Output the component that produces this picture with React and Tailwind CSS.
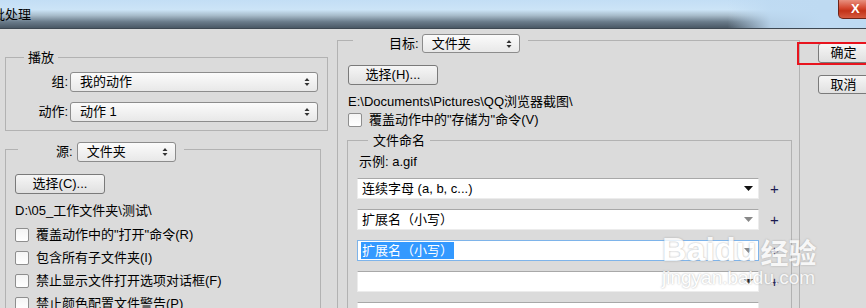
import React from "react";

const UpDown = () => (
<svg width="6" height="10" viewBox="0 0 6 10">
<path d="M3 1 L5.5 4 H0.5 Z M3 9 L5.5 6 H0.5 Z" fill="#333"/>
</svg>
)

const Select = ({className,children}) => (
<div className={`flex items-center justify-between pl-[9px] pr-[7px] border border-[#8c8c8c] rounded-[3px] bg-[linear-gradient(#fbfbfb,#e8e8e8)] ${className}`}>
<span>{children}</span>
<UpDown/>
</div>
)

const Button = ({className,children}) => (
<div className={`flex items-center justify-center border border-[#7a7a7a] rounded-[3px] bg-[linear-gradient(#f6f6f6,#e0e0e0)] ${className}`}>
{children}
</div>
)

const Check = ({children}) => (
<div className="flex items-center h-[23px] gap-[7px] shrink-0">
<div className="w-[14px] h-[14px] border border-[#8e8e8e] rounded-[2px] bg-[linear-gradient(#f4f4f4,#ffffff)]"></div>
<span>{children}</span>
</div>
)

const NameRow = ({children,selected,dark}) => (
<div className="flex items-center shrink-0">
<div className={`flex items-center justify-between w-[402px] h-[21px] bg-white border ${selected?"border-[#7eb4ea]":"border-[#ececec] border-t-[#a8a8a8]"} pl-[3px] pr-[5px]`}>
<span className={selected?"bg-[#3399ff] text-white px-[1px] leading-[17px]":"px-[1px]"}>{children}</span>
<svg width="9" height="5" viewBox="0 0 9 5"><path d="M0 0 H9 L4.5 5 Z" fill={dark?"#111":"#888"}/></svg>
</div>
<span className="ml-[11px] text-[15px] leading-none text-[#1a1a50]">+</span>
</div>
)

export default function App(){
return(
<div className="relative w-[866px] h-[308px] overflow-hidden bg-[#dbdbdb] flex flex-col text-[13px] leading-[16px] text-black font-['Liberation_Sans','Noto_Sans_CJK_SC',sans-serif]">

{/* TITLE BAR */}
<div className="flex shrink-0 h-[29px] border-b border-[#3e4852] bg-[linear-gradient(to_right,rgba(190,218,242,0)_0%,rgba(190,218,242,0)_84%,rgba(190,218,242,0.9)_89%,rgba(190,218,242,1)_95%),linear-gradient(to_bottom,#c3def5_0%,#cce4f7_35%,#a8bccb_55%,#6a7b8a_78%,#4a5865_100%)]">
<span className="ml-[-8px] mt-[6px] text-[13px] leading-[16px] font-['Noto_Sans_CJK_SC',sans-serif]">批处理</span>
<div className="flex-1"></div>
<div className="w-[43px] h-[19px] mr-[-15px] rounded-bl-[5px] border border-t-0 border-[#6d2418] bg-[linear-gradient(#e8907f,#d4472f_45%,#c23218_60%,#d45a40)] flex items-center pl-[12px] text-white font-bold text-[13px]">X</div>
</div>

<div className="flex flex-1 min-h-0">

{/* LEFT */}
<div className="w-[332px] shrink-0 pl-[5px] pt-[28px] flex flex-col">

<div className="relative shrink-0 w-[323px] h-[74px] border border-[#b2b2b2] pt-[14px] flex flex-col gap-[10px]">
<span className="absolute left-[18px] top-[-9px] bg-[#dbdbdb] px-[4px] font-['Noto_Sans_CJK_SC',sans-serif]">播放</span>
<div className="flex items-center">
<span className="w-[62px] text-right">组:</span>
<Select className="ml-[2px] w-[248px] h-[20px]">我的动作</Select>
</div>
<div className="flex items-center">
<span className="w-[62px] text-right">动作:</span>
<Select className="ml-[2px] w-[248px] h-[20px]">动作 1</Select>
</div>
</div>

<div className="relative w-[316px] flex-1 mt-[18px] border border-b-0 border-[#b2b2b2] pt-[24px] pl-[9px] flex flex-col">
<div className="absolute left-[12px] top-[-8px] bg-[#dbdbdb] pl-[38px] pr-[8px] flex items-center gap-[4px]">
<span>源:</span>
<Select className="w-[99px] h-[20px]">文件夹</Select>
</div>
<Button className="w-[90px] h-[20px] shrink-0">选择(C)...</Button>
<div className="mt-[9px] shrink-0">D:\05_工作文件夹\测试\</div>
<div className="mt-[4px] flex flex-col">
<Check>覆盖动作中的"打开"命令(R)</Check>
<Check>包含所有子文件夹(I)</Check>
<Check>禁止显示文件打开选项对话框(F)</Check>
<Check>禁止颜色配置文件警告(P)</Check>
</div>
</div>

</div>

{/* MIDDLE */}
<div className="w-[468px] shrink-0 pl-[5px] pt-[11px] flex flex-col">
<div className="relative flex-1 border border-b-0 border-[#b2b2b2] pt-[24px] pl-[10px] flex flex-col">
<div className="absolute left-[15px] top-[-7px] bg-[#dbdbdb] pl-[36px] pr-[8px] flex items-center gap-[3px]">
<span>目标:</span>
<Select className="w-[98px] h-[19px]">文件夹</Select>
</div>
<Button className="w-[90px] h-[20px] shrink-0">选择(H)...</Button>
<div className="mt-[9px] shrink-0">E:\Documents\Pictures\QQ浏览器截图\</div>
<div className="mt-[-2px] shrink-0">
<Check>覆盖动作中的"存储为"命令(V)</Check>
</div>

<div className="relative ml-[-1px] mt-[9px] w-[445px] flex-1 border border-b-0 border-[#b2b2b2] pt-[13px] pl-[9px] flex flex-col">
<span className="absolute left-[20px] top-[-9px] bg-[#dbdbdb] px-[5px] font-['Noto_Sans_CJK_SC',sans-serif]">文件命名</span>
<div className="ml-[2px] shrink-0">示例: a.gif</div>
<div className="mt-[8px] flex flex-col gap-[10px]">
<NameRow dark>连续字母 (a, b, c...)</NameRow>
<NameRow>扩展名（小写）</NameRow>
<NameRow selected>扩展名（小写）</NameRow>
<NameRow dark>{""}</NameRow>
<NameRow>{""}</NameRow>
</div>
</div>
</div>
</div>

{/* RIGHT */}
<div className="flex-1 min-w-0 pl-[18px] pt-[14px] flex flex-col gap-[12px]">
<Button className="w-[75px] h-[20px] shrink-0 pr-[24px]">确定</Button>
<Button className="w-[75px] h-[19px] shrink-0 pr-[24px]">取消</Button>
</div>

</div>

{/* HIGHLIGHT BOX */}
<div className="absolute left-[797px] top-[42px] w-[72px] h-[23px] border-2 border-[#e8141e]"></div>

{/* WATERMARK */}
<div className="absolute left-[662px] top-[232px] flex flex-col items-start text-white opacity-80 [text-shadow:0_0_2px_#9a9a9a] pointer-events-none">
<div className="flex items-end leading-none">
<span className="text-[34px] font-bold font-['Liberation_Sans',sans-serif]">Bai</span>
<span className="text-[34px] font-bold font-['Liberation_Sans',sans-serif]">du</span>
<span className="ml-[4px] text-[28px] font-bold font-['Noto_Sans_CJK_SC',sans-serif]">经验</span>
</div>
<span className="mt-[2px] text-[19px] leading-none font-['Liberation_Sans',sans-serif]">jingyan.baidu.com</span>
</div>

</div>
)
}
